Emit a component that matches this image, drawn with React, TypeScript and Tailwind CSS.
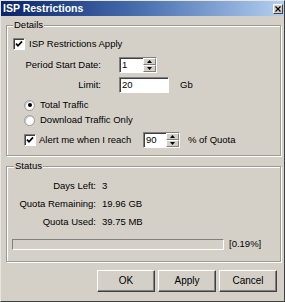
import React from "react";

const sunken =
  "border border-t-[#808080] border-l-[#808080] border-r-white border-b-white shadow-[inset_1px_1px_0_#404040]";

function Check() {
  return (
    <span className={`w-[12px] h-[12px] shrink-0 bg-white flex items-center justify-center ${sunken}`}>
      <svg width="8" height="8" viewBox="0 0 8 8">
        <polyline points="1,3.6 3,5.8 7,1.4" fill="none" stroke="#000" strokeWidth="1.7" />
      </svg>
    </span>
  );
}

function Radio({ on }: { on?: boolean }) {
  return (
    <span className="w-[11px] h-[11px] shrink-0 rounded-full bg-white border border-[#9a9a9a] shadow-[inset_1px_1px_0_#c8c8c8] flex items-center justify-center">
      {on && <span className="w-[4px] h-[4px] rounded-full bg-black" />}
    </span>
  );
}

function SpinBtn({ up }: { up?: boolean }) {
  return (
    <span className="flex-1 flex items-center justify-center bg-[#d4d0c8] border border-t-white border-l-white border-r-[#808080] border-b-[#808080]">
      <svg width="5" height="3" viewBox="0 0 5 3">
        {up ? <polygon points="0,3 5,3 2.5,0" fill="#000" /> : <polygon points="0,0 5,0 2.5,3" fill="#000" />}
      </svg>
    </span>
  );
}

function Spinner({ value, w }: { value: string; w: string }) {
  return (
    <div className={`flex h-[16px] bg-white ${sunken} ${w}`}>
      <span className="flex-1 pl-[2px] leading-[14px]">{value}</span>
      <span className="flex flex-col w-[13px]">
        <SpinBtn up />
        <SpinBtn />
      </span>
    </div>
  );
}

function Button({ label }: { label: string }) {
  return (
    <button className="w-[58px] h-[22px] bg-[#d4d0c8] border border-t-white border-l-white border-r-[#404040] border-b-[#404040] shadow-[inset_-1px_-1px_0_#808080] text-[10px] leading-none text-black">
      {label}
    </button>
  );
}

const groupCls =
  "border border-[#9c9a94] shadow-[inset_1px_1px_0_#fff,1px_1px_0_#fff] m-0";

export default function App() {
  return (
    <div
      className="w-[285px] h-[302px] bg-[#d4d0c8] flex flex-col border border-t-[#e8e6e0] border-l-[#e8e6e0] border-r-[#404040] border-b-[#404040] text-black text-[9.5px] leading-[12px] overflow-hidden"
      style={{ fontFamily: '"Liberation Sans", Arial, sans-serif' }}
    >
      {/* Title bar */}
      <div className="h-[15px] flex items-center justify-between bg-linear-to-r from-[#0a246a] via-[#4a70b0] to-[#b4d0f0] pl-[2px] pr-[1px]">
        <span className="text-white font-bold text-[10.5px] leading-none">ISP Restrictions</span>
        <span className="w-[10px] h-[10px] bg-[#d4d0c8] border border-t-white border-l-white border-r-[#404040] border-b-[#404040] flex items-center justify-center">
          <svg width="6" height="6" viewBox="0 0 6 6">
            <path d="M0.5 0.5 L5.5 5.5 M5.5 0.5 L0.5 5.5" stroke="#000" strokeWidth="1.2" />
          </svg>
        </span>
      </div>

      {/* Body */}
      <div className="flex flex-col pt-[3px] pl-[5px] pr-[3px]">
        {/* Details */}
        <fieldset className={`${groupCls} pl-[6px] pr-[6px] pb-[7px]`}>
          <legend className="px-[1px] bg-[#d4d0c8] leading-[12px]">Details</legend>
          <div className="flex items-center gap-[4px] h-[14px] mt-[6px]">
            <Check />
            <span>ISP Restrictions Apply</span>
          </div>
          <div className="grid grid-cols-[88px_auto] gap-x-[18px] gap-y-[4px] mt-[6px] items-center">
            <span className="text-right">Period Start Date:</span>
            <Spinner value="1" w="w-[38px]" />
            <span className="text-right">Limit:</span>
            <div className="flex items-center gap-[11px]">
              <div className={`w-[50px] h-[16px] bg-white pl-[2px] leading-[14px] ${sunken}`}>20</div>
              <span>Gb</span>
            </div>
          </div>
          <div className="flex flex-col ml-[11px] mt-[5px]">
            <div className="flex items-center gap-[5px] h-[14px]">
              <Radio on />
              <span>Total Traffic</span>
            </div>
            <div className="flex items-center gap-[5px] h-[14px] mt-[1px]">
              <Radio />
              <span>Download Traffic Only</span>
            </div>
            <div className="flex items-center h-[16px] mt-[5px]">
              <Check />
              <span className="w-[107px] pl-[3px]">Alert me when I reach</span>
              <Spinner value="90" w="w-[37px]" />
              <span className="ml-[8px]">% of Quota</span>
            </div>
          </div>
        </fieldset>

        {/* Status */}
        <fieldset className={`${groupCls} mt-[4px] pl-[5px] pr-[6px] pb-[11px]`}>
          <legend className="ml-[2px] px-[1px] bg-[#d4d0c8] leading-[12px]">Status</legend>
          <div className="grid grid-cols-[84px_auto] gap-x-[6px] gap-y-[4px] mt-[7px]">
            <span className="text-right h-[14px] leading-[14px]">Days Left:</span>
            <span className="leading-[14px]">3</span>
            <span className="text-right h-[14px] leading-[14px]">Quota Remaining:</span>
            <span className="leading-[14px]">19.96 GB</span>
            <span className="text-right h-[14px] leading-[14px]">Quota Used:</span>
            <span className="leading-[14px]">39.75 MB</span>
          </div>
          <div className="flex items-center mt-[9px] gap-[5px]">
            <div className="w-[212px] h-[11px] border border-t-[#808080] border-l-[#808080] border-r-white border-b-white bg-[#d4d0c8]" />
            <span>[0.19%]</span>
          </div>
        </fieldset>

        {/* Buttons */}
        <div className="flex justify-end gap-[3px] mt-[8px] pr-[4px]">
          <Button label="OK" />
          <Button label="Apply" />
          <Button label="Cancel" />
        </div>
      </div>
    </div>
  );
}
